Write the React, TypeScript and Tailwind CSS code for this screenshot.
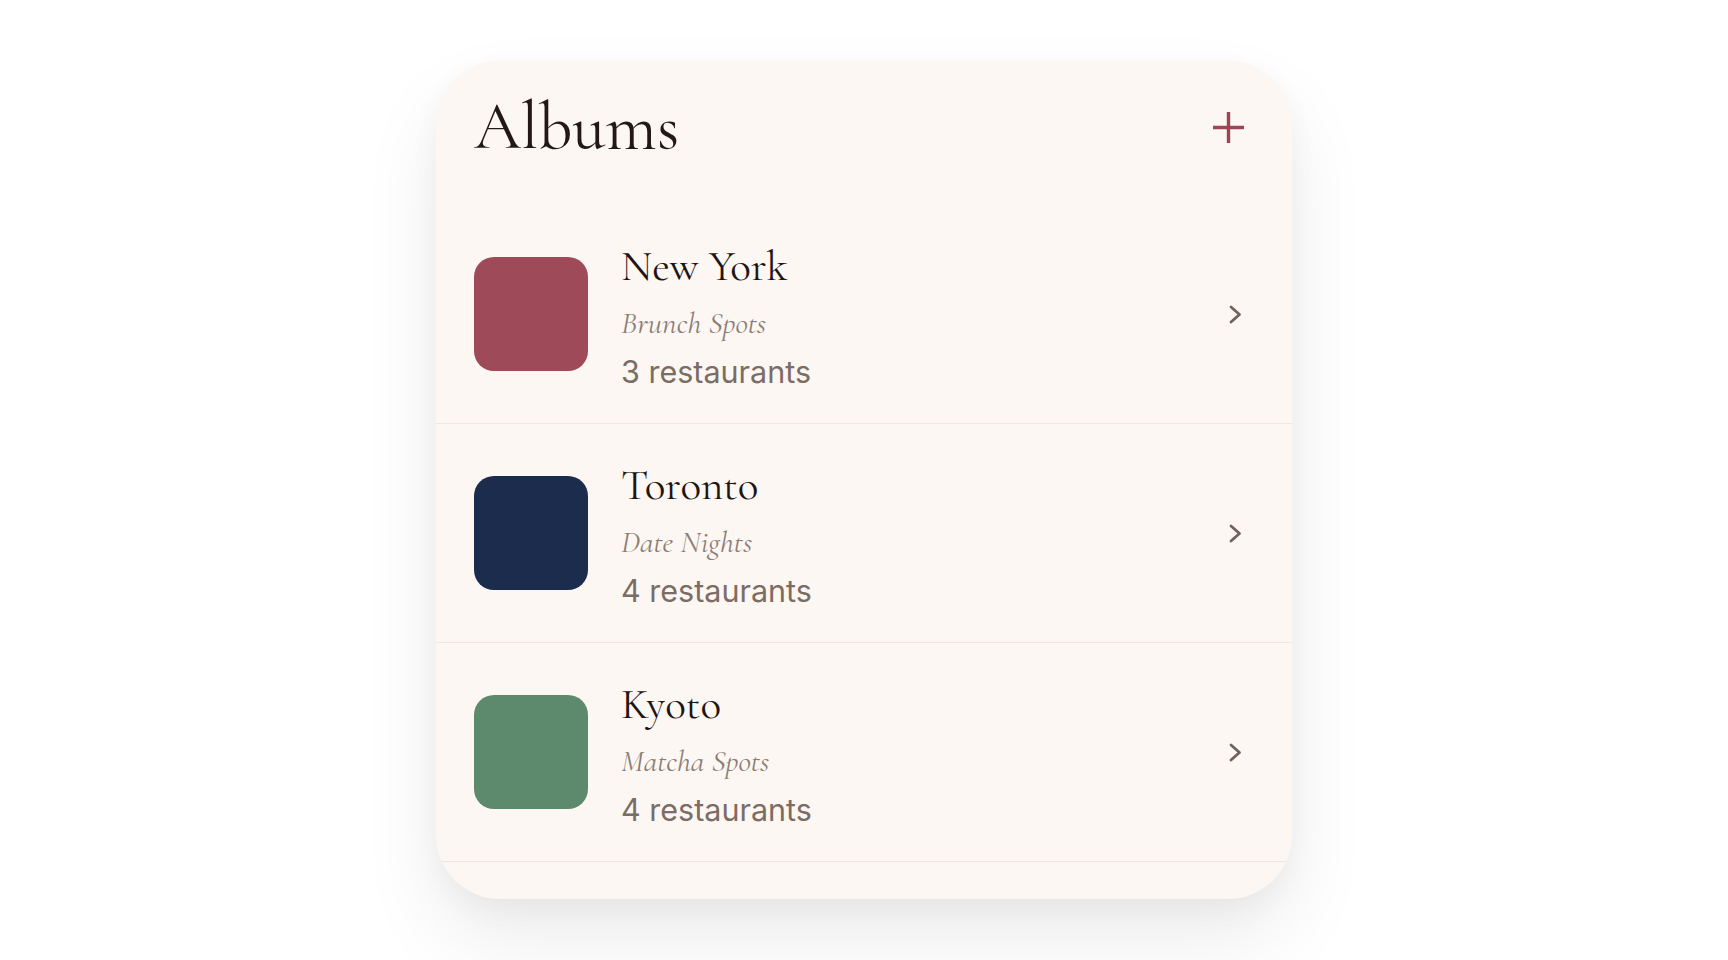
import React from "react";

interface Album {
  city: string;
  label: string;
  count: number;
  color: string;
}

const albums: Album[] = [
  { city: "New York", label: "Brunch Spots", count: 3, color: "bg-[#9e4a58]" },
  { city: "Toronto", label: "Date Nights", count: 4, color: "bg-[#1c2c4c]" },
  { city: "Kyoto", label: "Matcha Spots", count: 4, color: "bg-[#5d8a6c]" },
];

const serif = "font-['Cormorant_Garamond','Liberation_Serif',serif]";
const sans = "font-['Inter','Liberation_Sans',sans-serif]";

function PlusIcon() {
  return (
    <svg width="31" height="31" viewBox="0 0 31 31" fill="none" stroke="#9a4656" strokeWidth="3.4">
      <line x1="15.5" y1="0" x2="15.5" y2="31" />
      <line x1="0" y1="15.5" x2="31" y2="15.5" />
    </svg>
  );
}

function Chevron() {
  return (
    <svg width="13" height="19" viewBox="0 0 13 19" fill="none" stroke="#6f625b" strokeWidth="2.8" strokeLinecap="round" strokeLinejoin="round">
      <polyline points="2,2 10.5,9.5 2,17" />
    </svg>
  );
}

function AlbumRow({ album }: { album: Album }) {
  return (
    <div className="flex h-[219px] items-center border-b border-[#efe6df] pl-[38px] pr-[50px]">
      <div className={`h-[114px] w-[114px] shrink-0 rounded-[20px] ${album.color}`} />
      <div className="ml-[33px] mt-[6px] flex flex-1 flex-col">
        <span className={`${serif} text-[43px] leading-[44px] text-[#1e1512]`}>{album.city}</span>
        <span className={`${serif} mt-[17px] text-[31px] italic leading-[36px] text-[#8c7d76]`}>
          {album.label}
        </span>
        <span className={`${sans} mt-[13px] text-[30.5px] leading-[36px] text-[#7b6c64]`}>
          {album.count} restaurants
        </span>
      </div>
      <Chevron />
    </div>
  );
}

export default function App() {
  return (
    <div className="flex min-h-[960px] w-full justify-center bg-white pt-[61px]">
      <div className="h-[838px] w-[856px] overflow-hidden rounded-[64px] bg-[#fcf7f3] shadow-[0_40px_80px_rgba(0,0,0,0.08),0_10px_30px_rgba(0,0,0,0.04)]">
        {/* Header */}
        <div className="flex h-[144px] items-start justify-between pl-[38px] pr-[48px] pt-[38px]">
          <h1 className={`${serif} text-[67px] font-normal leading-[56px] text-[#231815]`}>Albums</h1>
          <button className="flex h-[56px] items-center" aria-label="Add album">
            <PlusIcon />
          </button>
        </div>

        {/* List */}
        <div>
          {albums.map((a) => (
            <AlbumRow key={a.city} album={a} />
          ))}
        </div>
      </div>
    </div>
  );
}
